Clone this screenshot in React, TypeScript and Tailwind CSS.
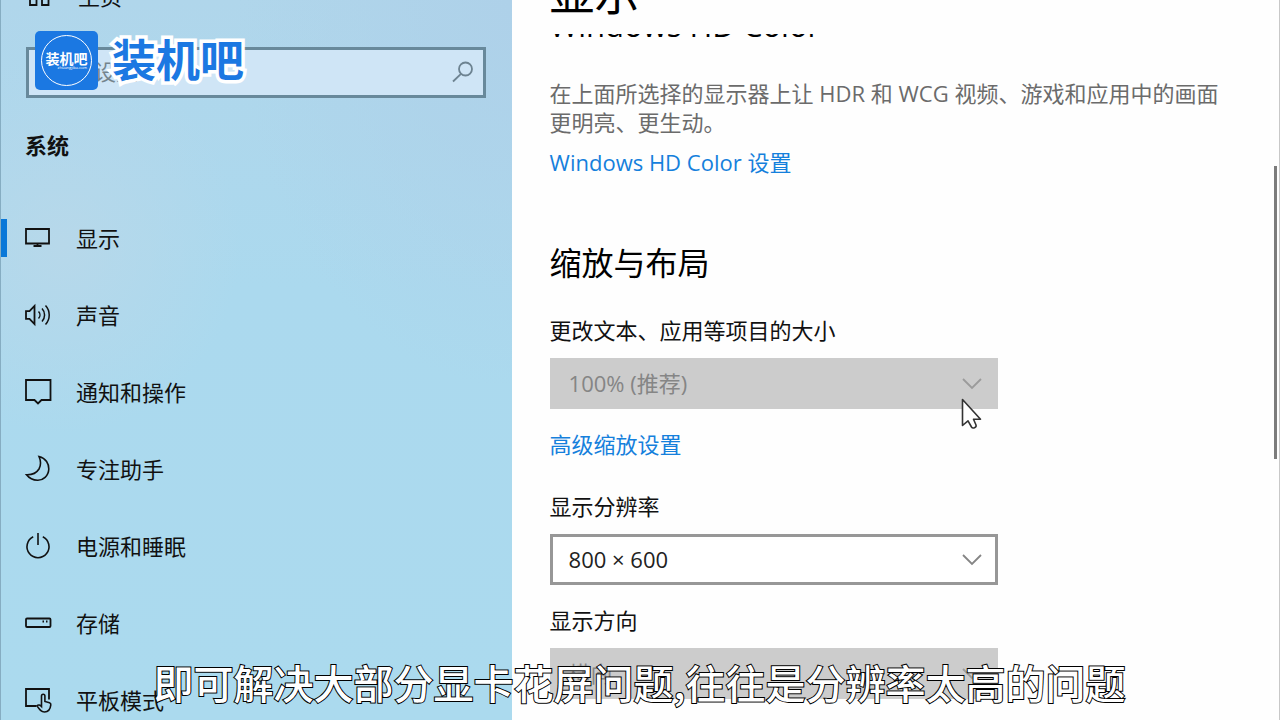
import type { ReactNode } from "react";

const strokeProps = {
  fill: "none",
  stroke: "currentColor",
  strokeWidth: 1.8,
  viewBox: "0 0 28 28",
  className: "h-7 w-7 shrink-0",
  "aria-hidden": true,
} as const;

function HomeIcon() {
  return (
    <svg {...strokeProps}>
      <path d="M4 10v13h6.500v-8h5.500v8h6.500V10M3 11 13.500 2l10.500 9" />
    </svg>
  );
}

function DisplayIcon() {
  return (
    <svg {...strokeProps}>
      <path d="M2 5h23v14.500H2zM13.500 19.500v2.500M9.500 22h8" />
    </svg>
  );
}

function SoundIcon() {
  return (
    <svg {...strokeProps}>
      <path d="M2 10.200h3.500L10.500 5v18l-5-5.200H2z" />
      <path d="M14.500 10.500a5 5 0 0 1 0 7M18 7.500a9.500 9.500 0 0 1 0 13M21.500 4.500a14 14 0 0 1 0 19" strokeWidth="1.5" />
    </svg>
  );
}

function NotificationIcon() {
  return (
    <svg {...strokeProps}>
      <path d="M2 2h24.500v20H17.500L14 25.500l-3.500-3.500H2z" />
    </svg>
  );
}

function MoonIcon() {
  return (
    <svg {...strokeProps} strokeWidth="1.600">
      <path d="M15 1.500C22 3 25 9 24.800 14 24.500 21 19 25.500 13.500 25.300 8.500 25.200 5 23 2.500 19.800 8 20 12.500 18 15 14 17.200 10 17 6 15 1.500z" />
    </svg>
  );
}

function PowerIcon() {
  return (
    <svg {...strokeProps} strokeWidth="1.600">
      <path d="M14 1v12M9.200 4.800a11 11 0 1 0 9.600 0" />
    </svg>
  );
}

function StorageIcon() {
  return (
    <svg {...strokeProps}>
      <rect x="2" y="9.500" width="24.500" height="8.500" rx="1" />
      <path d="M18.500 12.500h1.500M22 12.500h1.500" />
    </svg>
  );
}

function TabletIcon() {
  return (
    <svg {...strokeProps}>
      <path d="M12.500 20H2V3h23v10.500" />
      <path d="M17.500 20.500v-10.500a1.700 1.700 0 0 1 3.400 0V15.500l4.600 1.200c1.100.4 1.500 1 1.300 2.200-.5 4.500-2.300 7.100-6.300 7.100-3.500 0-5-2.500-7.500-6.200 1.300-1.500 3-.8 4.500.7z" strokeWidth="1.600" />
    </svg>
  );
}

function Chevron({ faded = false }: { faded?: boolean }) {
  return (
    <svg
      viewBox="0 0 20 12"
      className={
        faded
          ? "pointer-events-none absolute right-4 top-5 h-3 w-5 text-[#9b9b9b]"
          : "pointer-events-none absolute right-4 top-5 h-3 w-5 text-[#858585]"
      }
      fill="none"
      stroke="currentColor"
      strokeWidth="1.8"
      aria-hidden
    >
      <path d="m1 1 9 9 9-9" />
    </svg>
  );
}

function Field({
  id,
  label,
  value,
  disabled = false,
  className,
}: {
  id: string;
  label: string;
  value: string;
  disabled?: boolean;
  className: string;
}) {
  return (
    <div className={className}>
      <label htmlFor={id} className="block text-[22px] leading-[29px] text-[#111]">
        {label}
      </label>
      <div className="relative mt-[13px]">
        <select
          id={id}
          disabled={disabled}
          defaultValue={value}
          className="block h-[51px] w-full appearance-none rounded-none border-[3px] border-[#979797] bg-white pl-4 text-[22px] text-[#222] opacity-100 outline-none disabled:border-[#cccccc] disabled:bg-[#cccccc] disabled:text-[#858585]"
        >
          <option>{value}</option>
        </select>
        <Chevron faded={disabled} />
      </div>
    </div>
  );
}

const items: { label: string; icon: ReactNode }[] = [
  { label: "显示", icon: <DisplayIcon /> },
  { label: "声音", icon: <SoundIcon /> },
  { label: "通知和操作", icon: <NotificationIcon /> },
  { label: "专注助手", icon: <MoonIcon /> },
  { label: "电源和睡眠", icon: <PowerIcon /> },
  { label: "存储", icon: <StorageIcon /> },
  { label: "平板模式", icon: <TabletIcon /> },
];

function Sidebar() {
  return (
    <aside className="w-2/5 shrink-0 overflow-hidden border-l border-[#86adc2] bg-[radial-gradient(ellipse_at_12%_34%,#b7d8ea_0%,transparent_28%),radial-gradient(ellipse_at_100%_0%,#aed1e9_0%,transparent_38%),linear-gradient(#b0d6eb,#abd9ee_40%,#abdaee)]">
      <a href="#home" className="-mt-[43px] flex h-[77px] items-center pl-[25px] text-[22px] text-[#111]">
        <HomeIcon />
        <span className="ml-6 pt-[2px]">主页</span>
      </a>
      <div className="relative ml-[25px] mr-[26px] mt-[13px]">
        <input
          type="search"
          aria-label="查找设置"
          placeholder="查找设置"
          className="block h-[51px] w-full rounded-none border-[3px] border-[#68899b] bg-[#cfe5f6] pb-1 pl-[21px] pr-12 text-[22px] text-[#222] outline-none placeholder:text-[#75848c]"
        />
        <svg
          viewBox="0 0 22 22"
          className="pointer-events-none absolute right-3 top-[14px] h-[22px] w-[22px] text-[#6d8391]"
          fill="none"
          stroke="currentColor"
          strokeWidth="1.8"
          aria-hidden
        >
          <circle cx="13.500" cy="8" r="6.500" />
          <path d="M9 12.800 1 20.500" />
        </svg>
      </div>
      <h2 className="ml-6 mt-[33px] text-[22px] font-bold leading-[29px] text-[#111]">系统</h2>
      <nav className="mt-[39px]">
        {items.map((item, i) => (
          <a
            key={item.label}
            href={`#${item.label}`}
            aria-current={i === 0 ? "page" : undefined}
            className="group flex h-[77px] items-center text-[22px] text-[#111]"
          >
            <span className="mr-[17px] h-[38px] w-[6px] group-aria-[current=page]:bg-[#0a78d8]" />
            {item.icon}
            <span className="ml-6 pt-[2px]">{item.label}</span>
          </a>
        ))}
      </nav>
    </aside>
  );
}

function Content() {
  return (
    <main className="min-w-0 flex-1 overflow-hidden pl-[38px] pr-[43px]">
      <header className="flex h-[34px] flex-col overflow-hidden">
        <h1 className="-mt-9 text-[45px] leading-[60px] text-black">显示</h1>
      </header>
      <div className="h-[45px] overflow-hidden">
        <h2 className="-mt-[30px] text-[31px] leading-[42px] text-black">Windows HD Color</h2>
      </div>
      <p className="text-[22px] leading-[29px] text-[#6b6b6b]">
        在上面所选择的显示器上让 HDR 和 WCG 视频、游戏和应用中的画面更明亮、更生动。
      </p>
      <a href="#hd-color" className="mt-[11px] block text-[22px] leading-[29px] text-[#1580dc]">
        Windows HD Color 设置
      </a>
      <h2 className="mt-[65px] text-[32px] leading-[42px] text-black">缩放与布局</h2>
      <div className="max-w-[448px]">
        <Field id="scale" label="更改文本、应用等项目的大小" value="100% (推荐)" disabled className="mt-8" />
        <a href="#advanced" className="mt-[21px] block text-[22px] leading-[29px] text-[#1580dc]">
          高级缩放设置
        </a>
        <Field id="resolution" label="显示分辨率" value="800 × 600" className="mt-[33px]" />
        <Field id="orientation" label="显示方向" value="横向" disabled className="mt-[21px]" />
      </div>
    </main>
  );
}

function Brand() {
  return (
    <div className="absolute left-[35px] top-[31px] flex items-center gap-[14px] font-bold">
      <div className="flex h-[59px] w-[63px] items-center justify-center rounded-[5px] bg-[#1b78e2]">
        <div className="flex h-[51px] w-[51px] flex-col items-center justify-center rounded-full border-[1px] border-white text-white">
          <span className="text-[14px] leading-[14px]">装机吧</span>
          <span className="self-end pr-1 text-[4px] font-normal leading-[4px]">zhuangjiba.com</span>
        </div>
      </div>
      <span className="text-[44px] leading-[59px] text-[#1b78e2] [-webkit-text-stroke:7px_white] [paint-order:stroke_fill]">
        装机吧
      </span>
    </div>
  );
}

export default function App() {
  return (
    <div className="relative flex h-screen overflow-hidden border-r border-[#c8c8c8] bg-[#fefefe] font-['Open_Sans','Noto_Sans_CJK_SC',sans-serif]">
      <Sidebar />
      <Content />
      <div className="mr-[2px] mt-[166px] h-[293px] w-[3px] shrink-0 bg-[#7c7c7c]" />

      <Brand />

      <svg viewBox="0 0 22 32" className="absolute left-[961px] top-[398px] h-8 w-[22px]" aria-hidden>
        <path
          d="M1.500 1.500V27.500L7 22.800 10.500 29C11.800 31 15.800 29.500 15 27L12.500 21.300H19.500z"
          fill="white"
          stroke="#333"
          strokeWidth="1.600"
          strokeLinejoin="round"
        />
      </svg>

      <p className="absolute inset-x-0 bottom-0 whitespace-nowrap text-center font-['Noto_Sans_CJK_SC',sans-serif] text-[40px] font-medium leading-[76px] text-white [-webkit-text-stroke:2px_black] [paint-order:stroke_fill]">
        即可解决大部分显卡花屏问题,往往是分辨率太高的问题
      </p>
    </div>
  );
}
